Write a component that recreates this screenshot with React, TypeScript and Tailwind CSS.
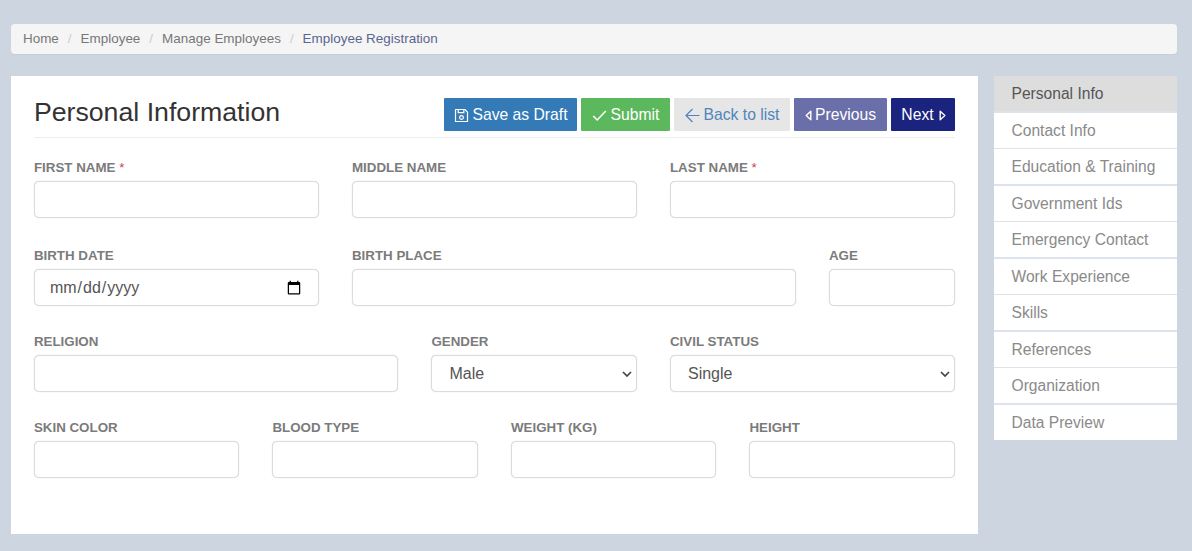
import React from 'react';

const navItems = [
  'Personal Info',
  'Contact Info',
  'Education & Training',
  'Government Ids',
  'Emergency Contact',
  'Work Experience',
  'Skills',
  'References',
  'Organization',
  'Data Preview',
];

const inputClass =
  'block h-[37px] w-full rounded-[5px] border border-[#dcdcdc] bg-white px-[15px] text-[16px] text-[#555] shadow-[0_0_1px_rgba(0,0,0,0.2)] outline-none';

const btnClass =
  'flex h-[33px] items-center justify-center rounded-[1px] pt-px text-[15.7px] leading-none';

function Field(props: { label: string; required?: boolean; span: string; children?: React.ReactNode }) {
  return (
    <div className={props.span}>
      <label className="mb-[5px] block h-[17px] text-[13.35px] leading-[17px] font-bold text-[#7b7b7b] uppercase">
        {props.label}
        {props.required && <span className="font-normal text-[#c9444a]"> *</span>}
      </label>
      {props.children ?? <input type="text" className={inputClass} />}
    </div>
  );
}

function SelectField(props: { label: string; span: string; value: string }) {
  return (
    <Field label={props.label} span={props.span}>
      <div className="relative">
        <select defaultValue={props.value} className={`${inputClass} appearance-none pl-[17px]`}>
          <option>{props.value}</option>
        </select>
        <svg
          width="10"
          height="6"
          viewBox="0 0 10 6"
          fill="none"
          stroke="#444"
          strokeWidth="1.7"
          className="pointer-events-none absolute top-[16px] right-[5px]"
        >
          <path d="M1 1l4 4 4-4" />
        </svg>
      </div>
    </Field>
  );
}

function FloppyIcon() {
  return (
    <svg width="15" height="15" viewBox="0 0 16 16" fill="none" stroke="currentColor" strokeWidth="1.3" className="mr-[3px] ml-px">
      <path d="M1.6 1.6h10l2.8 2.8v10H1.6z" strokeLinejoin="round" />
      <path d="M4.5 1.6v3.4h6V1.6" />
      <circle cx="8" cy="10.2" r="2" />
    </svg>
  );
}

function CheckIcon() {
  return (
    <svg width="15" height="13" viewBox="0 0 16 14" fill="none" stroke="currentColor" strokeWidth="1.7" className="mr-[4px]">
      <path d="M1.2 7.5l4.3 4.3 9.3-9.6" />
    </svg>
  );
}

function ArrowIcon() {
  return (
    <svg width="15" height="15" viewBox="0 0 15 15" fill="none" stroke="currentColor" strokeWidth="1.2" className="mr-[4px]">
      <path d="M14.5 7.5H1M7.5 1L1 7.5 7.5 14" />
    </svg>
  );
}

function CaretIcon(props: { dir: 'left' | 'right' }) {
  return (
    <svg width="7" height="11" viewBox="0 0 7 11" fill="none" stroke="currentColor" strokeWidth="1.4">
      <path d={props.dir === 'left' ? 'M5.8 1.2L1.2 5.5l4.6 4.3z' : 'M1.2 1.2l4.6 4.3-4.6 4.3z'} strokeLinejoin="round" />
    </svg>
  );
}

export default function App() {
  return (
    <div className="h-[551px] overflow-hidden bg-[#cdd6e0] pt-[24px] pr-[15px] pl-[11px] font-['Liberation_Sans',Arial,sans-serif]">
      {/* Breadcrumb */}
      <div className="flex h-[30px] items-center rounded-[4px] bg-[#f5f5f5] pl-[12px] text-[13.45px] text-[#777] shadow-[0_1px_1px_rgba(0,0,0,0.04)]">
        <span>Home</span>
        <span className="px-[9px] text-[#ccc]">/</span>
        <span>Employee</span>
        <span className="px-[9px] text-[#ccc]">/</span>
        <span>Manage Employees</span>
        <span className="px-[9px] text-[#ccc]">/</span>
        <span className="text-[#5a6590]">Employee Registration</span>
      </div>

      <div className="mt-[22px] flex items-start gap-[16px]">
        {/* Form panel */}
        <div className="h-[458px] w-[967px] bg-white pt-[22px] pr-[23px] pl-[22.9px]">
          <div className="flex h-[40px] items-start justify-between border-b border-[#eee]">
            <h1 className="text-[26.7px] leading-[29px] text-[#333]">Personal Information</h1>
            <div className="flex gap-[4px]">
              <button className={`${btnClass} w-[133px] bg-[#337ab7] text-white`}>
                <FloppyIcon />
                Save as Draft
              </button>
              <button className={`${btnClass} w-[89px] bg-[#5cb85c] text-white`}>
                <CheckIcon />
                Submit
              </button>
              <button className={`${btnClass} w-[116px] bg-[#e6e6e6] text-[#4f85bd]`}>
                <ArrowIcon />
                Back to list
              </button>
              <button className={`${btnClass} w-[93px] gap-[3px] bg-[#6a6ea9] text-white`}>
                <CaretIcon dir="left" />
                Previous
              </button>
              <button className={`${btnClass} w-[64px] gap-[5px] bg-[#1a237e] pl-px text-white`}>
                Next
                <CaretIcon dir="right" />
              </button>
            </div>
          </div>

          <div className="mt-[21px] grid grid-cols-12 gap-x-[33px]">
            <Field label="First Name" required span="col-span-4" />
            <Field label="Middle Name" span="col-span-4" />
            <Field label="Last Name" required span="col-span-4" />
          </div>

          <div className="mt-[29px] grid grid-cols-12 gap-x-[33px]">
            <Field label="Birth Date" span="col-span-4">
              <input type="date" className={`${inputClass} pr-[14px] pl-[14px]`} />
            </Field>
            <Field label="Birth Place" span="col-span-6" />
            <Field label="Age" span="col-span-2" />
          </div>

          <div className="mt-[27px] grid grid-cols-12 gap-x-[33px]">
            <Field label="Religion" span="col-span-5" />
            <SelectField label="Gender" span="col-span-3" value="Male" />
            <SelectField label="Civil Status" span="col-span-4" value="Single" />
          </div>

          <div className="mt-[27px] grid grid-cols-12 gap-x-[33px]">
            <Field label="Skin Color" span="col-span-3" />
            <Field label="Blood Type" span="col-span-3" />
            <Field label="Weight (kg)" span="col-span-3" />
            <Field label="Height" span="col-span-3" />
          </div>
        </div>

        {/* Side nav */}
        <div className="flex w-[183px] flex-col gap-[1.5px] bg-[#dde3ec]">
          {navItems.map((item, i) => (
            <div
              key={item}
              className={`flex h-[35px] items-center pt-px pl-[17.5px] text-[15.6px] ${
                i === 0 ? 'bg-[#dddddd] text-[#555]' : 'bg-white text-[#8a8a8a]'
              }`}
            >
              {item}
            </div>
          ))}
        </div>
      </div>
    </div>
  );
}
